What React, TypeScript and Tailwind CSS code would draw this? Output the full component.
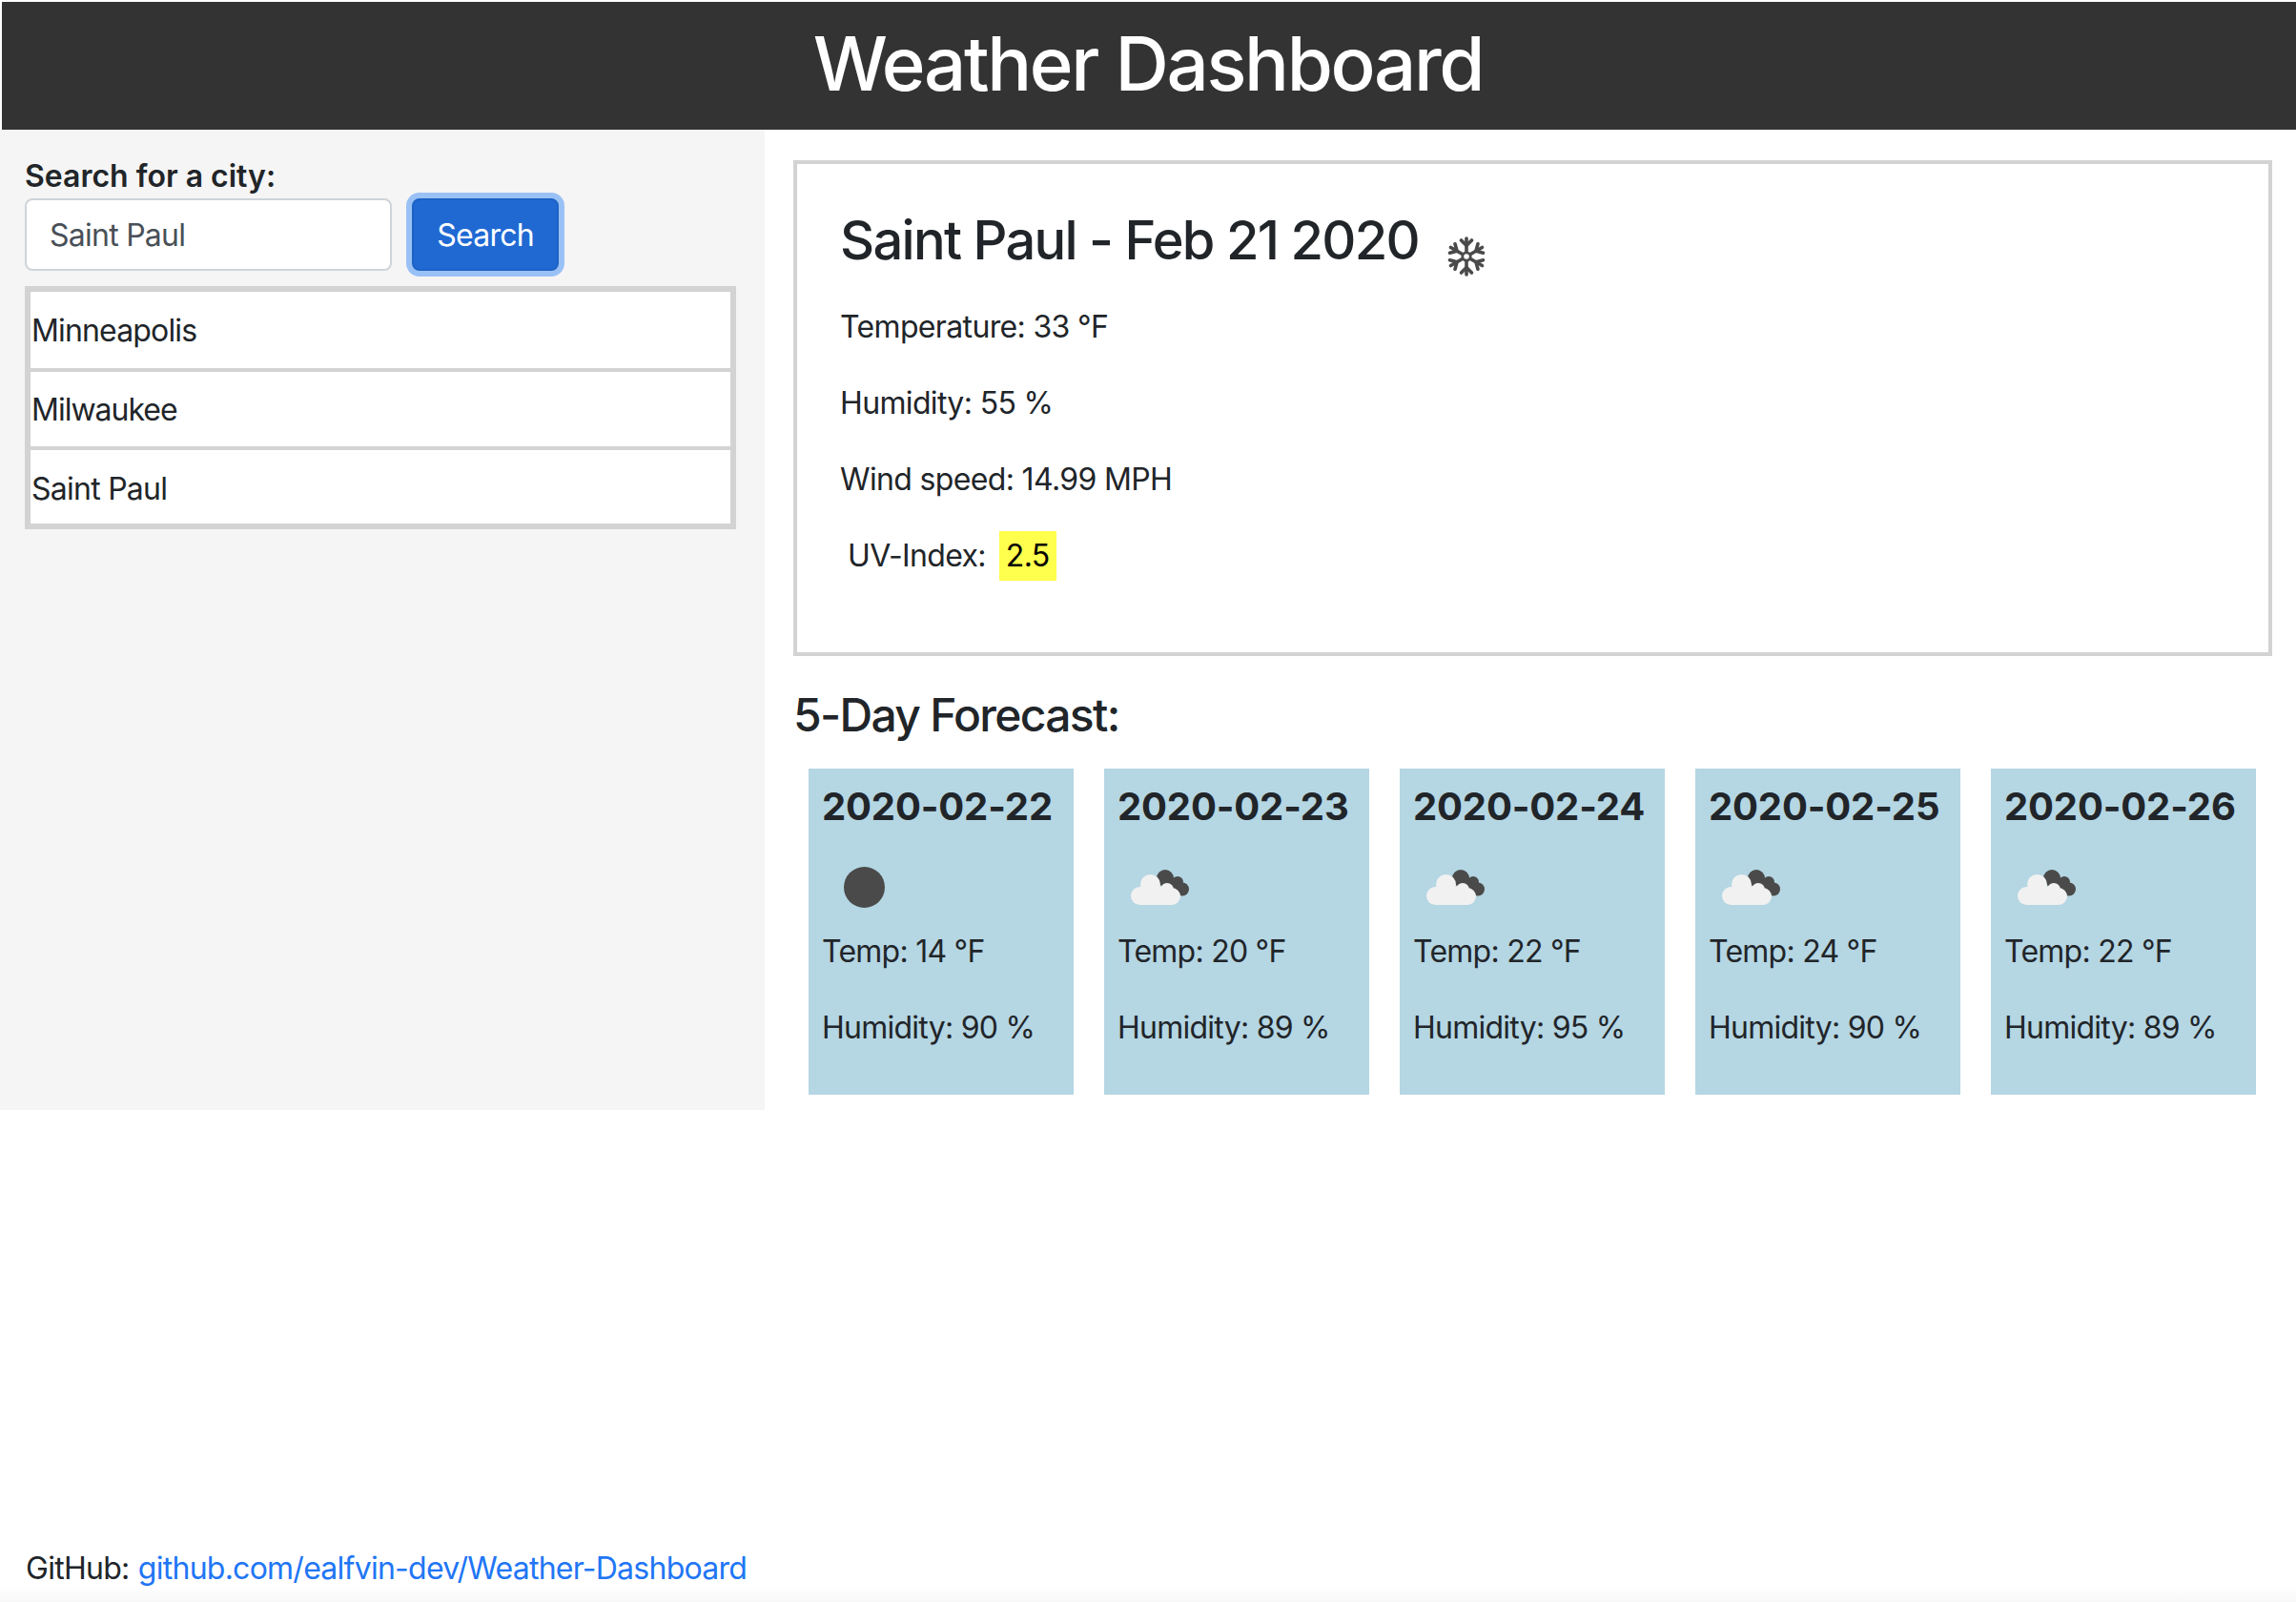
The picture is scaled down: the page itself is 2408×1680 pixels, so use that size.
const days = [
  { date: "2020-02-22", temp: 14, hum: 90, clear: true },
  { date: "2020-02-23", temp: 20, hum: 89, clear: false },
  { date: "2020-02-24", temp: 22, hum: 95, clear: false },
  { date: "2020-02-25", temp: 24, hum: 90, clear: false },
  { date: "2020-02-26", temp: 22, hum: 89, clear: false },
];

function Moon() {
  return (
    <svg width="100" height="88" viewBox="0 0 100 88" className="block">
      <circle cx="44.5" cy="44.5" r="21.5" fill="#4a4a4a" />
    </svg>
  );
}

function Clouds() {
  return (
    <svg width="100" height="88" viewBox="0 0 100 88" className="block">
      <g fill="#4a4a4a">
        <circle cx="50" cy="35" r="9" />
        <circle cx="63" cy="39" r="6" />
        <circle cx="68" cy="46.5" r="7" />
        <rect x="47" y="36" width="20" height="16" />
      </g>
      <g fill="#f1f1f1">
        <circle cx="34.5" cy="41.5" r="10.5" />
        <circle cx="52" cy="47" r="7" />
        <circle cx="23.5" cy="53.5" r="9.5" />
        <circle cx="57" cy="54" r="9" />
        <rect x="23" y="44" width="34" height="19" />
      </g>
    </svg>
  );
}

function Snow() {
  const arm = [0, 60, 120, 180, 240, 300];
  return (
    <svg width="40" height="42" viewBox="-20 -21 40 42" className="block">
      {arm.map((a) => (
        <g key={a} transform={`rotate(${a})`} stroke="#4a4a4a" strokeWidth="3.6" fill="none" strokeLinecap="round">
          <path d="M0 -5.5 V-19" />
          <path d="M-5.5 -17 L0 -11.5 L5.5 -17" />
        </g>
      ))}
      <circle r="4.2" fill="none" stroke="#4a4a4a" strokeWidth="2.8" />
    </svg>
  );
}

export default function App() {
  return (
    <div className="flex h-[1680px] flex-col overflow-hidden bg-white font-['Inter',sans-serif] text-[32px] leading-[48px] tracking-[-0.75px] text-[#212529]">
      <header className="ml-[2px] mt-[2px] flex h-[134px] items-center justify-center bg-[#333333] pb-[4px] pr-[2px] text-[78px] font-medium tracking-[-2.35px] text-white">
        Weather Dashboard
      </header>
      <div className="flex">
        <aside className="h-[1028px] w-[802px] bg-[#f5f5f5] pl-[26px] pr-[30px] pt-[24px]">
          <label className="block pt-[1px] -mb-[1px] text-[32px] font-semibold tracking-[0px]">Search for a city:</label>
          <div className="flex items-start gap-[21px]">
            <div className="flex h-[76px] w-[385px] items-center rounded-[8px] border-2 border-[#ced4da] bg-white pl-[24px] pt-[2px] text-[#495057]">
              Saint Paul
            </div>
            <button className="h-[76px] w-[154px] rounded-[8px] border-2 border-[#1d62c4] bg-[#2069d3] pt-[2px] text-white shadow-[0_0_0_6px_#9ac1f6]">
              Search
            </button>
          </div>
          <ul className="mt-[16px] w-[746px] border-4 border-[#d3d3d3]">
            {["Minneapolis", "Milwaukee", "Saint Paul"].map((c, i) => (
              <li
                key={c}
                className={`flex items-center border-2 border-[#d3d3d3] bg-white pl-[1px] ${i === 2 ? "h-[81px] pt-[4px] tracking-[-0.75px]" : i === 0 ? "h-[84px] pt-[2px] tracking-[-0.85px]" : "h-[82px] pt-[1px] tracking-[-1px]"}`}
              >
                {c}
              </li>
            ))}
          </ul>
        </aside>
        <main className="w-[1606px] pl-[30px] pr-[25px] pt-[32px]">
          <section className="h-[520px] border-4 border-[#d3d3d3] pl-[45px] pt-[47px] tracking-[-0.65px]">
            <div className="flex items-start">
              <h2 className="text-[56px] font-[550] leading-[67px] tracking-[-1.72px]">Saint Paul - Feb 21 2020</h2>
              <div className="ml-[30px] mt-[29px]">
                <Snow />
              </div>
            </div>
            <p className="mt-[29px]">Temperature: 33 °F</p>
            <p className="mt-[32px]">Humidity: 55 %</p>
            <p className="mt-[32px]">Wind speed: 14.99 MPH</p>
            <p className="mt-[32px] pl-[8px]">
              UV-Index:
              <span className="-my-[2px] ml-[14px] inline-block bg-[#ffff4d] px-[7px] leading-[52px] text-black">2.5</span>
            </p>
          </section>
          <h3 className="mt-[33px] text-[48px] font-[550] leading-[58px] tracking-[-1.7px]">5-Day Forecast:</h3>
          <div className="mt-[27px] flex gap-[32px] pl-[16px]">
            {days.map((d) => (
              <article key={d.date} className="h-[342px] w-[278px] bg-[#b5d6e3] pl-[14px] pt-[16px]">
                <h4 className="whitespace-nowrap text-[40px] font-bold leading-[48px] tracking-[-0.15px]">{d.date}</h4>
                <div className="mt-[16px]">{d.clear ? <Moon /> : <Clouds />}</div>
                <p>Temp: {d.temp} °F</p>
                <p className="mt-[32px]">Humidity: {d.hum} %</p>
              </article>
            ))}
          </div>
        </main>
      </div>
      <footer className="mt-auto bg-gradient-to-b from-white from-[75%] to-[#f8f8f8] pb-[11px] pl-[27px] pt-[10px] tracking-[-0.72px]">
        GitHub: <a className="ml-[1px] tracking-[-0.75px] text-[#2176f5]">github.com/ealfvin-dev/Weather-Dashboard</a>
      </footer>
    </div>
  );
}
